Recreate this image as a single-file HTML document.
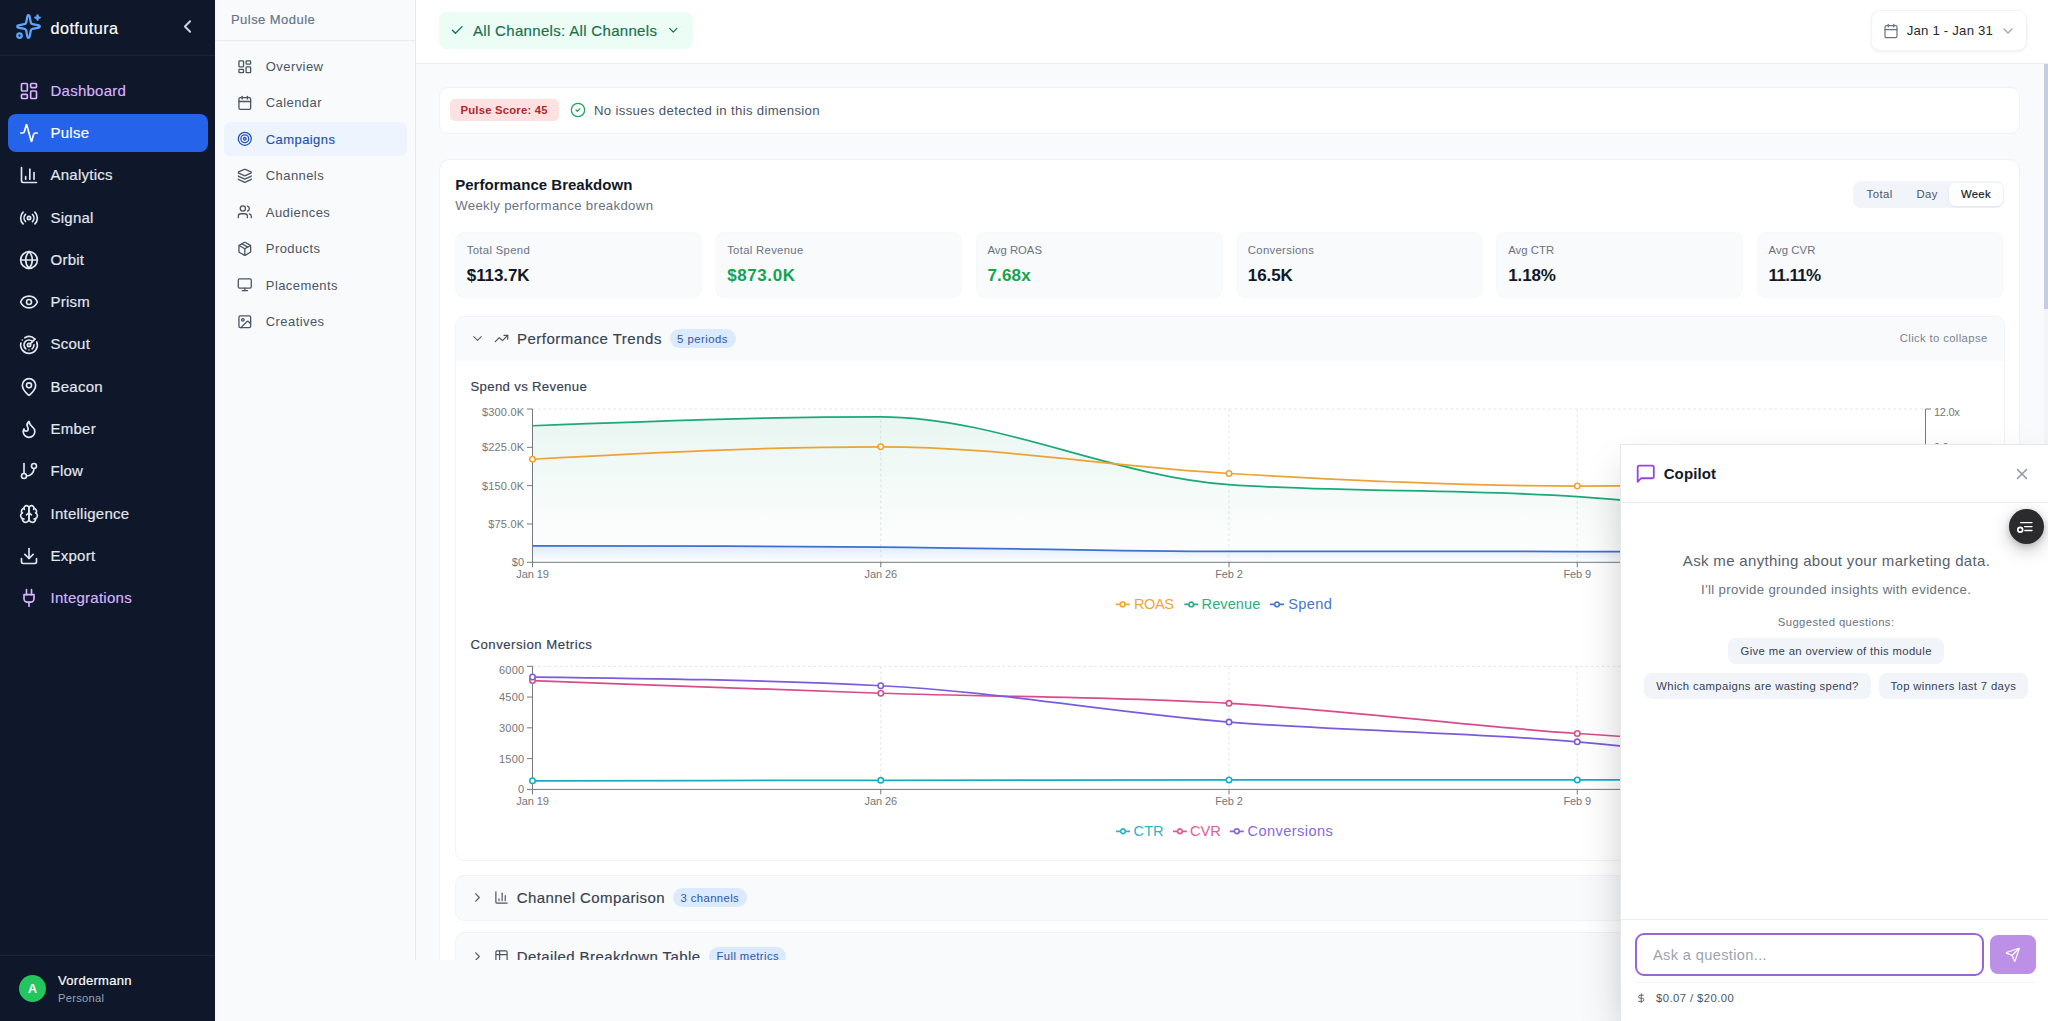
<!DOCTYPE html><html lang="en"><head><meta charset="utf-8"><title>dotfutura – Pulse – Campaigns</title><style>
*{box-sizing:border-box;margin:0;padding:0}
html,body{width:2048px;height:1021px;overflow:hidden;background:#f9fafb;font-family:"Liberation Sans", sans-serif;}
.t{position:absolute;white-space:nowrap;line-height:1;}
.b{position:absolute;}
.ic{position:absolute;display:block;overflow:visible}
.m{-webkit-text-stroke:0.17px currentColor;}
#sb{position:absolute;left:0;top:0;width:215px;height:1021px;background:#0f172a;}
#sub{position:absolute;left:215px;top:0;width:201px;height:960px;background:#f8fafc;border-right:1px solid #e5e8ee;}
#main{position:absolute;left:416px;top:0;width:1632px;height:960px;background:#f8fafc;overflow:hidden;}
#cp{position:absolute;left:1620px;top:444px;width:428px;height:577px;background:#fff;border-top:1px solid #e6e8ec;border-left:1px solid #e6e8ec;box-shadow:0 22px 45px -11px rgba(0,0,0,0.31);}
</style></head><body>
<div id="sb">
<svg class="ic" style="left:15.10px;top:13.00px;width:27px;height:27px;color:#60a5fa" viewBox="0 0 24 24" fill="none" stroke="currentColor" stroke-width="2" stroke-linecap="round" stroke-linejoin="round"><path d="M11.017 2.814a1 1 0 0 1 1.966 0l1.051 5.558a2 2 0 0 0 1.594 1.594l5.558 1.051a1 1 0 0 1 0 1.966l-5.558 1.051a2 2 0 0 0-1.594 1.594l-1.051 5.558a1 1 0 0 1-1.966 0l-1.051-5.558a2 2 0 0 0-1.594-1.594l-5.558-1.051a1 1 0 0 1 0-1.966l5.558-1.051a2 2 0 0 0 1.594-1.594z"/><path d="M20 2v4"/><path d="M22 4h-4"/><circle cx="4" cy="20" r="2"/></svg>
<div class="t m" style="left:50.50px;top:19.68px;font-size:16.2px;color:#ffffff;letter-spacing:0.45px;">dotfutura</div>
<svg class="ic" style="left:176.50px;top:16.10px;width:21px;height:21px;color:#cbd5e1" viewBox="0 0 24 24" fill="none" stroke="currentColor" stroke-width="2.2" stroke-linecap="round" stroke-linejoin="round"><path d="m15 18-6-6 6-6"/></svg>
<div class="b" style="left:0px;top:55px;width:215px;height:1px;background:#1b2537"></div>
<svg class="ic" style="left:18.80px;top:80.70px;width:20px;height:20px;color:#d8b4fe" viewBox="0 0 24 24" fill="none" stroke="currentColor" stroke-width="2" stroke-linecap="round" stroke-linejoin="round"><rect width="7" height="9" x="3" y="3" rx="1"/><rect width="7" height="5" x="14" y="3" rx="1"/><rect width="7" height="9" x="14" y="12" rx="1"/><rect width="7" height="5" x="3" y="16" rx="1"/></svg>
<div class="t m" style="left:50.50px;top:82.60px;font-size:15px;color:#d8b4fe;letter-spacing:0.25px;">Dashboard</div>
<div class="b" style="left:7.5px;top:113.49999999999999px;width:200.5px;height:38.4px;background:#2563eb;border-radius:8px"></div>
<svg class="ic" style="left:18.80px;top:123.00px;width:20px;height:20px;color:#ffffff" viewBox="0 0 24 24" fill="none" stroke="currentColor" stroke-width="2" stroke-linecap="round" stroke-linejoin="round"><path d="M22 12h-2.480a2 2 0 0 0-1.930 1.460l-2.350 8.360a.25.25 0 0 1-.480 0L9.240 2.180a.25.25 0 0 0-.480 0l-2.350 8.360A2 2 0 0 1 4.490 12H2"/></svg>
<div class="t m" style="left:50.50px;top:124.90px;font-size:15px;color:#ffffff;letter-spacing:0.25px;">Pulse</div>
<svg class="ic" style="left:18.80px;top:165.30px;width:20px;height:20px;color:#e2e8f0" viewBox="0 0 24 24" fill="none" stroke="currentColor" stroke-width="2" stroke-linecap="round" stroke-linejoin="round"><path d="M3 3v16a2 2 0 0 0 2 2h16"/><path d="M18 17V9"/><path d="M13 17V5"/><path d="M8 17v-3"/></svg>
<div class="t m" style="left:50.50px;top:167.20px;font-size:15px;color:#e2e8f0;letter-spacing:0.25px;">Analytics</div>
<svg class="ic" style="left:18.80px;top:207.60px;width:20px;height:20px;color:#e2e8f0" viewBox="0 0 24 24" fill="none" stroke="currentColor" stroke-width="2" stroke-linecap="round" stroke-linejoin="round"><path d="M4.900 19.100C1 15.200 1 8.800 4.900 4.900"/><path d="M7.800 16.200c-2.300-2.300-2.300-6.100 0-8.500"/><circle cx="12" cy="12" r="2"/><path d="M16.200 7.800c2.300 2.300 2.300 6.100 0 8.500"/><path d="M19.100 4.900C23 8.800 23 15.100 19.100 19"/></svg>
<div class="t m" style="left:50.50px;top:209.50px;font-size:15px;color:#e2e8f0;letter-spacing:0.25px;">Signal</div>
<svg class="ic" style="left:18.80px;top:249.90px;width:20px;height:20px;color:#e2e8f0" viewBox="0 0 24 24" fill="none" stroke="currentColor" stroke-width="2" stroke-linecap="round" stroke-linejoin="round"><circle cx="12" cy="12" r="10"/><path d="M12 2a14.500 14.500 0 0 0 0 20 14.500 14.500 0 0 0 0-20"/><path d="M2 12h20"/></svg>
<div class="t m" style="left:50.50px;top:251.80px;font-size:15px;color:#e2e8f0;letter-spacing:0.25px;">Orbit</div>
<svg class="ic" style="left:18.80px;top:292.20px;width:20px;height:20px;color:#e2e8f0" viewBox="0 0 24 24" fill="none" stroke="currentColor" stroke-width="2" stroke-linecap="round" stroke-linejoin="round"><path d="M2.062 12.348a1 1 0 0 1 0-.696 10.750 10.750 0 0 1 19.876 0 1 1 0 0 1 0 .696 10.750 10.750 0 0 1-19.876 0"/><circle cx="12" cy="12" r="3"/></svg>
<div class="t m" style="left:50.50px;top:294.10px;font-size:15px;color:#e2e8f0;letter-spacing:0.25px;">Prism</div>
<svg class="ic" style="left:18.80px;top:334.50px;width:20px;height:20px;color:#e2e8f0" viewBox="0 0 24 24" fill="none" stroke="currentColor" stroke-width="2" stroke-linecap="round" stroke-linejoin="round"><path d="M19.070 4.930A10 10 0 0 0 6.990 3.340"/><path d="M4 6h.010"/><path d="M2.290 9.620A10 10 0 1 0 21.310 8.350"/><path d="M16.240 7.760A6 6 0 1 0 8.230 16.670"/><path d="M12 18h.010"/><path d="M17.990 11.660A6 6 0 0 1 15.770 16.670"/><circle cx="12" cy="12" r="2"/><path d="m13.410 10.590 5.660-5.660"/></svg>
<div class="t m" style="left:50.50px;top:336.40px;font-size:15px;color:#e2e8f0;letter-spacing:0.25px;">Scout</div>
<svg class="ic" style="left:18.80px;top:376.80px;width:20px;height:20px;color:#e2e8f0" viewBox="0 0 24 24" fill="none" stroke="currentColor" stroke-width="2" stroke-linecap="round" stroke-linejoin="round"><path d="M20 10c0 4.993-5.539 10.193-7.399 11.799a1 1 0 0 1-1.202 0C9.539 20.193 4 14.993 4 10a8 8 0 0 1 16 0"/><circle cx="12" cy="10" r="3"/></svg>
<div class="t m" style="left:50.50px;top:378.70px;font-size:15px;color:#e2e8f0;letter-spacing:0.25px;">Beacon</div>
<svg class="ic" style="left:18.80px;top:419.10px;width:20px;height:20px;color:#e2e8f0" viewBox="0 0 24 24" fill="none" stroke="currentColor" stroke-width="2" stroke-linecap="round" stroke-linejoin="round"><path d="M8.500 14.500A2.500 2.500 0 0 0 11 12c0-1.380-.500-2-1-3-1.072-2.143-.224-4.054 2-6 .500 2.500 2 4.900 4 6.500 2 1.600 3 3.500 3 5.500a7 7 0 1 1-14 0c0-1.153.433-2.294 1-3a2.500 2.500 0 0 0 2.500 2.500z"/></svg>
<div class="t m" style="left:50.50px;top:421.00px;font-size:15px;color:#e2e8f0;letter-spacing:0.25px;">Ember</div>
<svg class="ic" style="left:18.80px;top:461.40px;width:20px;height:20px;color:#e2e8f0" viewBox="0 0 24 24" fill="none" stroke="currentColor" stroke-width="2" stroke-linecap="round" stroke-linejoin="round"><line x1="6" x2="6" y1="3" y2="15"/><circle cx="18" cy="6" r="3"/><circle cx="6" cy="18" r="3"/><path d="M18 9a9 9 0 0 1-9 9"/></svg>
<div class="t m" style="left:50.50px;top:463.30px;font-size:15px;color:#e2e8f0;letter-spacing:0.25px;">Flow</div>
<svg class="ic" style="left:18.80px;top:503.70px;width:20px;height:20px;color:#e2e8f0" viewBox="0 0 24 24" fill="none" stroke="currentColor" stroke-width="2" stroke-linecap="round" stroke-linejoin="round"><path d="M12 5a3 3 0 1 0-5.997.125 4 4 0 0 0-2.526 5.770 4 4 0 0 0 .556 6.588A4 4 0 1 0 12 18Z"/><path d="M12 5a3 3 0 1 1 5.997.125 4 4 0 0 1 2.526 5.770 4 4 0 0 1-.556 6.588A4 4 0 1 1 12 18Z"/><path d="M15 13a4.500 4.500 0 0 1-3-4 4.500 4.500 0 0 1-3 4"/><path d="M17.599 6.500a3 3 0 0 0 .399-1.375"/><path d="M6.003 5.125A3 3 0 0 0 6.401 6.500"/><path d="M3.477 10.896a4 4 0 0 1 .585-.396"/><path d="M19.938 10.500a4 4 0 0 1 .585.396"/><path d="M6 18a4 4 0 0 1-1.967-.516"/><path d="M19.967 17.484A4 4 0 0 1 18 18"/></svg>
<div class="t m" style="left:50.50px;top:505.60px;font-size:15px;color:#e2e8f0;letter-spacing:0.25px;">Intelligence</div>
<svg class="ic" style="left:18.80px;top:546.00px;width:20px;height:20px;color:#e2e8f0" viewBox="0 0 24 24" fill="none" stroke="currentColor" stroke-width="2" stroke-linecap="round" stroke-linejoin="round"><path d="M21 15v4a2 2 0 0 1-2 2H5a2 2 0 0 1-2-2v-4"/><polyline points="7 10 12 15 17 10"/><line x1="12" x2="12" y1="15" y2="3"/></svg>
<div class="t m" style="left:50.50px;top:547.90px;font-size:15px;color:#e2e8f0;letter-spacing:0.25px;">Export</div>
<svg class="ic" style="left:18.80px;top:588.30px;width:20px;height:20px;color:#d8b4fe" viewBox="0 0 24 24" fill="none" stroke="currentColor" stroke-width="2" stroke-linecap="round" stroke-linejoin="round"><path d="M12 22v-5"/><path d="M9 8V2"/><path d="M15 8V2"/><path d="M18 8v5a4 4 0 0 1-4 4h-4a4 4 0 0 1-4-4V8Z"/></svg>
<div class="t m" style="left:50.50px;top:590.20px;font-size:15px;color:#d8b4fe;letter-spacing:0.25px;">Integrations</div>
<div class="b" style="left:0px;top:955px;width:215px;height:1px;background:#1b2537"></div>
<div class="b" style="left:18.7px;top:974.9px;width:27.6px;height:27.6px;background:#22c55e;border-radius:50%"></div>
<div class="t" style="left:32.50px;transform:translateX(-50%);top:983.35px;font-size:12.6px;color:#ffffff;font-weight:700;">A</div>
<div class="t m" style="left:58.00px;top:973.84px;font-size:13px;color:#ffffff;letter-spacing:0.3px;">Vordermann</div>
<div class="t" style="left:58.00px;top:992.68px;font-size:11.2px;color:#94a3b8;letter-spacing:0.25px;">Personal</div>
</div>
<div id="sub">
<div class="t m" style="left:16.00px;top:12.64px;font-size:13px;color:#64748b;letter-spacing:0.45px;">Pulse Module</div>
<div class="b" style="left:0px;top:40px;width:200px;height:1px;background:#e8ebf0"></div>
<svg class="ic" style="left:21.50px;top:58.50px;width:15.6px;height:15.6px;color:#4b5563" viewBox="0 0 24 24" fill="none" stroke="currentColor" stroke-width="2" stroke-linecap="round" stroke-linejoin="round"><rect width="7" height="9" x="3" y="3" rx="1"/><rect width="7" height="5" x="14" y="3" rx="1"/><rect width="7" height="9" x="14" y="12" rx="1"/><rect width="7" height="5" x="3" y="16" rx="1"/></svg>
<div class="t" style="left:50.80px;top:59.94px;font-size:13px;color:#4b5563;letter-spacing:0.42px;">Overview</div>
<svg class="ic" style="left:21.50px;top:94.95px;width:15.6px;height:15.6px;color:#4b5563" viewBox="0 0 24 24" fill="none" stroke="currentColor" stroke-width="2" stroke-linecap="round" stroke-linejoin="round"><path d="M8 2v4"/><path d="M16 2v4"/><rect width="18" height="18" x="3" y="4" rx="2"/><path d="M3 10h18"/></svg>
<div class="t" style="left:50.80px;top:96.39px;font-size:13px;color:#4b5563;letter-spacing:0.42px;">Calendar</div>
<div class="b" style="left:8.5px;top:121.50000000000001px;width:183px;height:34.6px;background:#eef4fd;border-radius:7px"></div>
<svg class="ic" style="left:21.50px;top:131.40px;width:15.6px;height:15.6px;color:#2453b3" viewBox="0 0 24 24" fill="none" stroke="currentColor" stroke-width="2" stroke-linecap="round" stroke-linejoin="round"><circle cx="12" cy="12" r="10"/><circle cx="12" cy="12" r="6"/><circle cx="12" cy="12" r="2"/></svg>
<div class="t m" style="left:50.80px;top:132.84px;font-size:13px;color:#2453b3;letter-spacing:0.42px;">Campaigns</div>
<svg class="ic" style="left:21.50px;top:167.85px;width:15.6px;height:15.6px;color:#4b5563" viewBox="0 0 24 24" fill="none" stroke="currentColor" stroke-width="2" stroke-linecap="round" stroke-linejoin="round"><path d="M12.830 2.180a2 2 0 0 0-1.660 0L2.600 6.080a1 1 0 0 0 0 1.830l8.580 3.910a2 2 0 0 0 1.660 0l8.580-3.900a1 1 0 0 0 0-1.830z"/><path d="M2 12a1 1 0 0 0 .580.910l8.600 3.910a2 2 0 0 0 1.650 0l8.580-3.900A1 1 0 0 0 22 12"/><path d="M2 17a1 1 0 0 0 .580.910l8.600 3.910a2 2 0 0 0 1.650 0l8.580-3.900A1 1 0 0 0 22 17"/></svg>
<div class="t" style="left:50.80px;top:169.29px;font-size:13px;color:#4b5563;letter-spacing:0.42px;">Channels</div>
<svg class="ic" style="left:21.50px;top:204.30px;width:15.6px;height:15.6px;color:#4b5563" viewBox="0 0 24 24" fill="none" stroke="currentColor" stroke-width="2" stroke-linecap="round" stroke-linejoin="round"><path d="M16 21v-2a4 4 0 0 0-4-4H6a4 4 0 0 0-4 4v2"/><circle cx="9" cy="7" r="4"/><path d="M22 21v-2a4 4 0 0 0-3-3.870"/><path d="M16 3.130a4 4 0 0 1 0 7.750"/></svg>
<div class="t" style="left:50.80px;top:205.74px;font-size:13px;color:#4b5563;letter-spacing:0.42px;">Audiences</div>
<svg class="ic" style="left:21.50px;top:240.75px;width:15.6px;height:15.6px;color:#4b5563" viewBox="0 0 24 24" fill="none" stroke="currentColor" stroke-width="2" stroke-linecap="round" stroke-linejoin="round"><path d="M11 21.730a2 2 0 0 0 2 0l7-4A2 2 0 0 0 21 16V8a2 2 0 0 0-1-1.730l-7-4a2 2 0 0 0-2 0l-7 4A2 2 0 0 0 3 8v8a2 2 0 0 0 1 1.730z"/><path d="M12 22V12"/><polyline points="3.290 7 12 12 20.710 7"/><path d="m7.500 4.270 9 5.150"/></svg>
<div class="t" style="left:50.80px;top:242.19px;font-size:13px;color:#4b5563;letter-spacing:0.42px;">Products</div>
<svg class="ic" style="left:21.50px;top:277.20px;width:15.6px;height:15.6px;color:#4b5563" viewBox="0 0 24 24" fill="none" stroke="currentColor" stroke-width="2" stroke-linecap="round" stroke-linejoin="round"><rect width="20" height="14" x="2" y="3" rx="2"/><line x1="8" x2="16" y1="21" y2="21"/><line x1="12" x2="12" y1="17" y2="21"/></svg>
<div class="t" style="left:50.80px;top:278.64px;font-size:13px;color:#4b5563;letter-spacing:0.42px;">Placements</div>
<svg class="ic" style="left:21.50px;top:313.65px;width:15.6px;height:15.6px;color:#4b5563" viewBox="0 0 24 24" fill="none" stroke="currentColor" stroke-width="2" stroke-linecap="round" stroke-linejoin="round"><rect width="18" height="18" x="3" y="3" rx="2" ry="2"/><circle cx="9" cy="9" r="2"/><path d="m21 15-3.086-3.086a2 2 0 0 0-2.828 0L6 21"/></svg>
<div class="t" style="left:50.80px;top:315.09px;font-size:13px;color:#4b5563;letter-spacing:0.42px;">Creatives</div>
</div>
<div id="main">
<div class="b" style="left:0px;top:0px;width:1632px;height:63px;background:#fff;border-bottom:1px solid #edeff3;height:64px"></div>
<div class="b" style="left:22.5px;top:11.5px;width:254px;height:37.5px;background:#ecfdf5;border-radius:8px"></div>
<svg class="ic" style="left:34.25px;top:23.25px;width:14.5px;height:14.5px;color:#047857" viewBox="0 0 24 24" fill="none" stroke="currentColor" stroke-width="2.2" stroke-linecap="round" stroke-linejoin="round"><path d="M20 6 9 17l-5-5"/></svg>
<div class="t m" style="left:57.00px;top:22.70px;font-size:15px;color:#15704f;letter-spacing:0.32px;">All Channels: All Channels</div>
<svg class="ic" style="left:250.25px;top:23.25px;width:14.5px;height:14.5px;color:#047857" viewBox="0 0 24 24" fill="none" stroke="currentColor" stroke-width="2" stroke-linecap="round" stroke-linejoin="round"><path d="m6 9 6 6 6-6"/></svg>
<div class="b" style="left:1455px;top:10px;width:156px;height:41px;background:#fff;border:1px solid #f1f3f6;border-radius:9px;box-shadow:0 1px 3px rgba(15,23,42,0.07)"></div>
<svg class="ic" style="left:1466.50px;top:22.50px;width:16px;height:16px;color:#6b7280" viewBox="0 0 24 24" fill="none" stroke="currentColor" stroke-width="1.8" stroke-linecap="round" stroke-linejoin="round"><path d="M8 2v4"/><path d="M16 2v4"/><rect width="18" height="18" x="3" y="4" rx="2"/><path d="M3 10h18"/></svg>
<div class="t" style="left:1490.75px;top:23.64px;font-size:13.2px;color:#1f2937;letter-spacing:0.2px;">Jan 1 - Jan 31</div>
<svg class="ic" style="left:1584.20px;top:22.70px;width:16px;height:16px;color:#9ca3af" viewBox="0 0 24 24" fill="none" stroke="currentColor" stroke-width="1.8" stroke-linecap="round" stroke-linejoin="round"><path d="m6 9 6 6 6-6"/></svg>
<div class="b" style="left:1628px;top:64px;width:4px;height:896px;background:#f1f4f9"></div>
<div class="b" style="left:1628px;top:64px;width:4px;height:245px;background:#c7cde0"></div>
<div class="b" style="left:23px;top:87px;width:1581px;height:47px;background:#fff;border:1px solid #f0f2f6;border-radius:9px"></div>
<div class="b" style="left:34px;top:99px;width:109px;height:22.2px;background:#fee2e2;border-radius:5px"></div>
<div class="t" style="left:44.50px;top:105.22px;font-size:11.3px;color:#b4262a;font-weight:700;letter-spacing:0.2px;">Pulse Score: 45</div>
<svg class="ic" style="left:154.00px;top:102.40px;width:16px;height:16px;color:#22a35a" viewBox="0 0 24 24" fill="none" stroke="currentColor" stroke-width="1.9" stroke-linecap="round" stroke-linejoin="round"><circle cx="12" cy="12" r="10"/><path d="m9 12 2 2 4-4"/></svg>
<div class="t" style="left:178.00px;top:103.54px;font-size:13.2px;color:#4b5563;letter-spacing:0.33px;">No issues detected in this dimension</div>
<div class="b" style="left:23px;top:159px;width:1581px;height:900px;background:#fff;border:1px solid #f0f2f6;border-radius:11px"></div>
<div class="t" style="left:39.20px;top:176.80px;font-size:15px;color:#111827;font-weight:700;letter-spacing:0.02px;">Performance Breakdown</div>
<div class="t" style="left:39.20px;top:198.74px;font-size:13.2px;color:#6b7280;letter-spacing:0.33px;">Weekly performance breakdown</div>
<div class="b" style="left:1437px;top:180.5px;width:151px;height:27px;background:#f1f5f9;border-radius:8px"></div>
<div class="b" style="left:1533px;top:183px;width:53.5px;height:22.5px;background:#fff;border-radius:6px;box-shadow:0 1px 2px rgba(15,23,42,0.08)"></div>
<div class="t" style="left:1450.50px;top:189.02px;font-size:11.3px;color:#4b5563;letter-spacing:0.5px;">Total</div>
<div class="t" style="left:1500.50px;top:189.02px;font-size:11.3px;color:#4b5563;letter-spacing:0.4px;">Day</div>
<div class="t m" style="left:1545.00px;top:189.02px;font-size:11.3px;color:#111827;letter-spacing:0.3px;">Week</div>
<div class="b" style="left:39.00px;top:232px;width:247px;height:66px;background:#f8fafc;border:1px solid #f6f8fa;border-radius:9px"></div>
<div class="t" style="left:50.80px;top:244.62px;font-size:11.3px;color:#6b7280;letter-spacing:0.32px;">Total Spend</div>
<div class="t" style="left:50.80px;top:267.16px;font-size:17px;color:#111827;font-weight:700;letter-spacing:-0.1px;">$113.7K</div>
<div class="b" style="left:299.35px;top:232px;width:247px;height:66px;background:#f8fafc;border:1px solid #f6f8fa;border-radius:9px"></div>
<div class="t" style="left:311.15px;top:244.62px;font-size:11.3px;color:#6b7280;letter-spacing:0.32px;">Total Revenue</div>
<div class="t" style="left:311.15px;top:267.16px;font-size:17px;color:#16a34a;font-weight:700;letter-spacing:0.6px;">$873.0K</div>
<div class="b" style="left:559.70px;top:232px;width:247px;height:66px;background:#f8fafc;border:1px solid #f6f8fa;border-radius:9px"></div>
<div class="t" style="left:571.50px;top:244.62px;font-size:11.3px;color:#6b7280;">Avg ROAS</div>
<div class="t" style="left:571.50px;top:267.16px;font-size:17px;color:#16a34a;font-weight:700;letter-spacing:0.15px;">7.68x</div>
<div class="b" style="left:820.05px;top:232px;width:247px;height:66px;background:#f8fafc;border:1px solid #f6f8fa;border-radius:9px"></div>
<div class="t" style="left:831.85px;top:244.62px;font-size:11.3px;color:#6b7280;letter-spacing:0.32px;">Conversions</div>
<div class="t" style="left:831.85px;top:267.16px;font-size:17px;color:#111827;font-weight:700;letter-spacing:-0.1px;">16.5K</div>
<div class="b" style="left:1080.40px;top:232px;width:247px;height:66px;background:#f8fafc;border:1px solid #f6f8fa;border-radius:9px"></div>
<div class="t" style="left:1092.20px;top:244.62px;font-size:11.3px;color:#6b7280;letter-spacing:0.05px;">Avg CTR</div>
<div class="t" style="left:1092.20px;top:267.16px;font-size:17px;color:#111827;font-weight:700;letter-spacing:-0.1px;">1.18%</div>
<div class="b" style="left:1340.75px;top:232px;width:247px;height:66px;background:#f8fafc;border:1px solid #f6f8fa;border-radius:9px"></div>
<div class="t" style="left:1352.55px;top:244.62px;font-size:11.3px;color:#6b7280;letter-spacing:0.1px;">Avg CVR</div>
<div class="t" style="left:1352.55px;top:267.16px;font-size:17px;color:#111827;font-weight:700;letter-spacing:-0.62px;">11.11%</div>
<div class="b" style="left:39px;top:315.5px;width:1549.5px;height:545.5px;background:#fff;border:1px solid #f1f3f6;border-radius:9px;overflow:hidden"></div>
<div class="b" style="left:40px;top:316.5px;width:1547.5px;height:44.5px;background:#f8fafc;border-radius:8px 8px 0 0"></div>
<svg class="ic" style="left:54.10px;top:331.40px;width:15px;height:15px;color:#56606e" viewBox="0 0 24 24" fill="none" stroke="currentColor" stroke-width="1.7" stroke-linecap="round" stroke-linejoin="round"><path d="m6 9 6 6 6-6"/></svg>
<svg class="ic" style="left:77.70px;top:331.40px;width:15px;height:15px;color:#4b5563" viewBox="0 0 24 24" fill="none" stroke="currentColor" stroke-width="1.9" stroke-linecap="round" stroke-linejoin="round"><polyline points="22 7 13.500 15.500 8.500 10.500 2 17"/><polyline points="16 7 22 7 22 13"/></svg>
<div class="t m" style="left:101.00px;top:331.40px;font-size:15px;color:#374151;letter-spacing:0.5px;">Performance Trends</div>
<div class="b" style="left:253.79999999999995px;top:329.3px;width:66.2px;height:19.2px;background:#dbeafe;border-radius:10px"></div>
<div class="t" style="left:261.00px;top:333.72px;font-size:11.3px;color:#2c56a8;letter-spacing:0.48px;">5 periods</div>
<div class="t" style="left:1483.80px;top:333.12px;font-size:11.3px;color:#7b8291;letter-spacing:0.36px;">Click to collapse</div>
<div class="t m" style="left:54.50px;top:379.94px;font-size:13.2px;color:#374151;letter-spacing:0.32px;">Spend vs Revenue</div>
<div class="t m" style="left:54.50px;top:638.14px;font-size:13.2px;color:#374151;letter-spacing:0.5px;">Conversion Metrics</div>
<svg class="ic" style="left:0;top:0;width:1632px;height:960px;font-family:'Liberation Sans', sans-serif" viewBox="416 0 1632 960"><defs><linearGradient id="gRev" x1="0" y1="0" x2="0" y2="1"><stop offset="0" stop-color="#1a9f75" stop-opacity="0.095"/><stop offset="1" stop-color="#1a9f75" stop-opacity="0.0"/></linearGradient><linearGradient id="gSp" x1="0" y1="0" x2="0" y2="1"><stop offset="0" stop-color="#3b82f6" stop-opacity="0.16"/><stop offset="1" stop-color="#3b82f6" stop-opacity="0.0"/></linearGradient></defs><g stroke="#dfe1e5" stroke-width="0.9" stroke-dasharray="2.7 2.7" fill="none"><line x1="532.5" y1="409" x2="1925.5" y2="409"/><line x1="880.75" y1="409" x2="880.75" y2="562.3"/><line x1="1229.0" y1="409" x2="1229.0" y2="562.3"/><line x1="1577.25" y1="409" x2="1577.25" y2="562.3"/></g><path d="M532.50,425.75C648.58,421.25,764.67,416.75,880.75,416.75C996.83,416.75,1112.92,476.70,1229.00,484.70C1345.08,492.70,1461.17,488.70,1577.25,496.70C1693.33,504.70,1809.42,522.35,1925.50,540.00L1925.5,562.3L532.5,562.3Z" fill="url(#gRev)"/><path d="M532.50,545.75C648.58,545.96,764.67,546.17,880.75,547.00C996.83,547.83,1112.92,551.33,1229.00,551.40C1345.08,551.47,1461.17,551.43,1577.25,551.50C1693.33,551.57,1809.42,551.78,1925.50,552.00L1925.5,562.3L532.5,562.3Z" fill="url(#gSp)"/><g stroke="#666a6e" stroke-width="0.9" fill="none"><line x1="532.5" y1="409" x2="532.5" y2="562.3"/><line x1="532.5" y1="562.3" x2="1925.5" y2="562.3"/><line x1="527" y1="562.30" x2="532.5" y2="562.30"/><line x1="527" y1="523.97" x2="532.5" y2="523.97"/><line x1="527" y1="485.65" x2="532.5" y2="485.65"/><line x1="527" y1="447.32" x2="532.5" y2="447.32"/><line x1="527" y1="409.00" x2="532.5" y2="409.00"/><line x1="532.5" y1="562.3" x2="532.5" y2="567.3"/><line x1="880.75" y1="562.3" x2="880.75" y2="567.3"/><line x1="1229.0" y1="562.3" x2="1229.0" y2="567.3"/><line x1="1577.25" y1="562.3" x2="1577.25" y2="567.3"/><line x1="1925.5" y1="562.3" x2="1925.5" y2="567.3"/><line x1="1925.5" y1="409" x2="1925.5" y2="562.3"/><line x1="1925.5" y1="562.30" x2="1931" y2="562.30"/><line x1="1925.5" y1="523.97" x2="1931" y2="523.97"/><line x1="1925.5" y1="485.65" x2="1931" y2="485.65"/><line x1="1925.5" y1="447.32" x2="1931" y2="447.32"/><line x1="1925.5" y1="409.00" x2="1931" y2="409.00"/></g><g fill="#74777c" font-size="11" letter-spacing="0.2"><text x="524.3" y="566.20" text-anchor="end">$0</text><text x="524.3" y="527.87" text-anchor="end">$75.0K</text><text x="524.3" y="489.55" text-anchor="end">$150.0K</text><text x="524.3" y="451.22" text-anchor="end">$225.0K</text><text x="524.3" y="416.30" text-anchor="end">$300.0K</text><text x="532.5" y="577.9" text-anchor="middle" letter-spacing="-0.1">Jan 19</text><text x="880.75" y="577.9" text-anchor="middle" letter-spacing="-0.1">Jan 26</text><text x="1229.0" y="577.9" text-anchor="middle" letter-spacing="-0.1">Feb 2</text><text x="1577.25" y="577.9" text-anchor="middle" letter-spacing="-0.1">Feb 9</text><text x="1925.5" y="577.9" text-anchor="middle" letter-spacing="-0.1">Feb 16</text><text x="1934" y="566.20" letter-spacing="-0.3">0.0x</text><text x="1934" y="527.87" letter-spacing="-0.3">3.0x</text><text x="1934" y="489.55" letter-spacing="-0.3">6.0x</text><text x="1934" y="451.22" letter-spacing="-0.3">9.0x</text><text x="1934" y="416.30" letter-spacing="-0.3">12.0x</text></g><path d="M532.50,425.75C648.58,421.25,764.67,416.75,880.75,416.75C996.83,416.75,1112.92,476.70,1229.00,484.70C1345.08,492.70,1461.17,488.70,1577.25,496.70C1693.33,504.70,1809.42,522.35,1925.50,540.00" fill="none" stroke="#1ba97a" stroke-width="1.75"/><path d="M532.50,545.75C648.58,545.96,764.67,546.17,880.75,547.00C996.83,547.83,1112.92,551.33,1229.00,551.40C1345.08,551.47,1461.17,551.43,1577.25,551.50C1693.33,551.57,1809.42,551.78,1925.50,552.00" fill="none" stroke="#3d70d2" stroke-width="1.75"/><path d="M532.50,459.25C648.58,453.00,764.67,446.75,880.75,446.75C996.83,446.75,1112.92,466.96,1229.00,473.50C1345.08,480.04,1461.17,486.00,1577.25,486.00C1693.33,486.00,1809.42,483.00,1925.50,480.00" fill="none" stroke="#eda332" stroke-width="1.75"/><circle cx="532.5" cy="459.25" r="2.7" fill="#fff" stroke="#eda332" stroke-width="1.6"/><circle cx="880.75" cy="446.75" r="2.7" fill="#fff" stroke="#eda332" stroke-width="1.6"/><circle cx="1229.0" cy="473.5" r="2.7" fill="#fff" stroke="#eda332" stroke-width="1.6"/><circle cx="1577.25" cy="486.0" r="2.7" fill="#fff" stroke="#eda332" stroke-width="1.6"/><circle cx="1925.5" cy="480" r="2.7" fill="#fff" stroke="#eda332" stroke-width="1.6"/><path d="M1115.7,604.4000000000001h4.67A2.33,2.33 0 1 1 1125.03,604.4000000000001H1129.7M1125.03,604.4000000000001A2.33,2.33 0 1 1 1120.3700000000001,604.4000000000001" fill="none" stroke="#eda737" stroke-width="1.7"/><text x="1134" y="608.8000000000001" font-size="14.6" fill="#eda737" letter-spacing="-0.45">ROAS</text><path d="M1184.3,604.4000000000001h4.67A2.33,2.33 0 1 1 1193.6299999999999,604.4000000000001H1198.3M1193.6299999999999,604.4000000000001A2.33,2.33 0 1 1 1188.97,604.4000000000001" fill="none" stroke="#2dae80" stroke-width="1.7"/><text x="1201.6" y="608.8000000000001" font-size="14.6" fill="#2dae80" letter-spacing="0.05">Revenue</text><path d="M1270,604.4000000000001h4.67A2.33,2.33 0 1 1 1279.33,604.4000000000001H1284M1279.33,604.4000000000001A2.33,2.33 0 1 1 1274.67,604.4000000000001" fill="none" stroke="#4676d0" stroke-width="1.7"/><text x="1288.2" y="608.8000000000001" font-size="14.6" fill="#4676d0" letter-spacing="0.35">Spend</text><g stroke="#dfe1e5" stroke-width="0.9" stroke-dasharray="2.7 2.7" fill="none"><line x1="532.5" y1="666.3" x2="1925.5" y2="666.3"/><line x1="880.75" y1="666.3" x2="880.75" y2="789.4"/><line x1="1229.0" y1="666.3" x2="1229.0" y2="789.4"/><line x1="1577.25" y1="666.3" x2="1577.25" y2="789.4"/></g><g stroke="#666a6e" stroke-width="0.9" fill="none"><line x1="532.5" y1="666.3" x2="532.5" y2="789.4"/><line x1="532.5" y1="789.4" x2="1925.5" y2="789.4"/><line x1="527" y1="789.40" x2="532.5" y2="789.40"/><line x1="527" y1="758.62" x2="532.5" y2="758.62"/><line x1="527" y1="727.85" x2="532.5" y2="727.85"/><line x1="527" y1="697.07" x2="532.5" y2="697.07"/><line x1="527" y1="666.30" x2="532.5" y2="666.30"/><line x1="532.5" y1="789.4" x2="532.5" y2="794.4"/><line x1="880.75" y1="789.4" x2="880.75" y2="794.4"/><line x1="1229.0" y1="789.4" x2="1229.0" y2="794.4"/><line x1="1577.25" y1="789.4" x2="1577.25" y2="794.4"/><line x1="1925.5" y1="789.4" x2="1925.5" y2="794.4"/></g><g fill="#74777c" font-size="11" letter-spacing="0.2"><text x="524.3" y="793.30" text-anchor="end">0</text><text x="524.3" y="762.52" text-anchor="end">1500</text><text x="524.3" y="731.75" text-anchor="end">3000</text><text x="524.3" y="700.97" text-anchor="end">4500</text><text x="524.3" y="673.60" text-anchor="end">6000</text><text x="532.5" y="805.0" text-anchor="middle" letter-spacing="-0.1">Jan 19</text><text x="880.75" y="805.0" text-anchor="middle" letter-spacing="-0.1">Jan 26</text><text x="1229.0" y="805.0" text-anchor="middle" letter-spacing="-0.1">Feb 2</text><text x="1577.25" y="805.0" text-anchor="middle" letter-spacing="-0.1">Feb 9</text><text x="1925.5" y="805.0" text-anchor="middle" letter-spacing="-0.1">Feb 16</text></g><path d="M532.50,780.75C648.58,780.60,764.67,780.44,880.75,780.30C996.83,780.16,1112.92,779.90,1229.00,779.90C1345.08,779.90,1461.17,779.90,1577.25,779.90C1693.33,779.90,1809.42,779.90,1925.50,779.90" fill="none" stroke="#18abc4" stroke-width="1.75"/><path d="M532.50,680.60C648.58,685.03,764.67,689.47,880.75,693.25C996.83,697.03,1112.92,696.60,1229.00,703.30C1345.08,710.00,1461.17,725.55,1577.25,733.50C1693.33,741.45,1809.42,746.23,1925.50,751.00" fill="none" stroke="#da4b8b" stroke-width="1.75"/><path d="M532.50,677.00C648.58,678.46,764.67,679.92,880.75,685.75C996.83,691.58,1112.92,712.76,1229.00,722.10C1345.08,731.44,1461.17,731.65,1577.25,741.80C1693.33,751.95,1809.42,767.48,1925.50,783.00" fill="none" stroke="#7b5bdb" stroke-width="1.75"/><circle cx="532.5" cy="780.75" r="2.7" fill="#fff" stroke="#18abc4" stroke-width="1.6"/><circle cx="880.75" cy="780.3" r="2.7" fill="#fff" stroke="#18abc4" stroke-width="1.6"/><circle cx="1229.0" cy="779.9" r="2.7" fill="#fff" stroke="#18abc4" stroke-width="1.6"/><circle cx="1577.25" cy="779.9" r="2.7" fill="#fff" stroke="#18abc4" stroke-width="1.6"/><circle cx="1925.5" cy="779.9" r="2.7" fill="#fff" stroke="#18abc4" stroke-width="1.6"/><circle cx="532.5" cy="680.6" r="2.7" fill="#fff" stroke="#da4b8b" stroke-width="1.6"/><circle cx="880.75" cy="693.25" r="2.7" fill="#fff" stroke="#da4b8b" stroke-width="1.6"/><circle cx="1229.0" cy="703.3" r="2.7" fill="#fff" stroke="#da4b8b" stroke-width="1.6"/><circle cx="1577.25" cy="733.5" r="2.7" fill="#fff" stroke="#da4b8b" stroke-width="1.6"/><circle cx="1925.5" cy="751" r="2.7" fill="#fff" stroke="#da4b8b" stroke-width="1.6"/><circle cx="532.5" cy="677" r="2.7" fill="#fff" stroke="#7b5bdb" stroke-width="1.6"/><circle cx="880.75" cy="685.75" r="2.7" fill="#fff" stroke="#7b5bdb" stroke-width="1.6"/><circle cx="1229.0" cy="722.1" r="2.7" fill="#fff" stroke="#7b5bdb" stroke-width="1.6"/><circle cx="1577.25" cy="741.8" r="2.7" fill="#fff" stroke="#7b5bdb" stroke-width="1.6"/><circle cx="1925.5" cy="783" r="2.7" fill="#fff" stroke="#7b5bdb" stroke-width="1.6"/><path d="M1116,831.3000000000001h4.67A2.33,2.33 0 1 1 1125.33,831.3000000000001H1130M1125.33,831.3000000000001A2.33,2.33 0 1 1 1120.67,831.3000000000001" fill="none" stroke="#2fb2ca" stroke-width="1.7"/><text x="1133.6" y="835.7" font-size="14.6" fill="#2fb2ca" letter-spacing="0.0">CTR</text><path d="M1172.9,831.3000000000001h4.67A2.33,2.33 0 1 1 1182.23,831.3000000000001H1186.9M1182.23,831.3000000000001A2.33,2.33 0 1 1 1177.5700000000002,831.3000000000001" fill="none" stroke="#df5c98" stroke-width="1.7"/><text x="1190" y="835.7" font-size="14.6" fill="#df5c98" letter-spacing="0.0">CVR</text><path d="M1229.8,831.3000000000001h4.67A2.33,2.33 0 1 1 1239.1299999999999,831.3000000000001H1243.8M1239.1299999999999,831.3000000000001A2.33,2.33 0 1 1 1234.47,831.3000000000001" fill="none" stroke="#8569de" stroke-width="1.7"/><text x="1247.5" y="835.7" font-size="14.6" fill="#8569de" letter-spacing="0.42">Conversions</text></svg>
<div class="b" style="left:39px;top:874.5px;width:1549.5px;height:46px;background:#f8fafc;border:1px solid #f1f4f7;border-radius:9px"></div>
<svg class="ic" style="left:53.90px;top:890.20px;width:15px;height:15px;color:#56606e" viewBox="0 0 24 24" fill="none" stroke="currentColor" stroke-width="1.7" stroke-linecap="round" stroke-linejoin="round"><path d="m9 18 6-6-6-6"/></svg>
<svg class="ic" style="left:77.50px;top:890.20px;width:15px;height:15px;color:#4b5563" viewBox="0 0 24 24" fill="none" stroke="currentColor" stroke-width="1.9" stroke-linecap="round" stroke-linejoin="round"><path d="M3 3v16a2 2 0 0 0 2 2h16"/><path d="M18 17V9"/><path d="M13 17V5"/><path d="M8 17v-3"/></svg>
<div class="t m" style="left:100.80px;top:890.20px;font-size:15px;color:#374151;letter-spacing:0.4px;">Channel Comparison</div>
<div class="b" style="left:257.20px;top:888.20px;width:73.4px;height:19.2px;background:#dbeafe;border-radius:10px"></div>
<div class="t" style="left:264.50px;top:892.52px;font-size:11.3px;color:#2c56a8;letter-spacing:0.4px;">3 channels</div>
<div class="b" style="left:39px;top:932.3px;width:1549.5px;height:46px;background:#f8fafc;border:1px solid #f1f4f7;border-radius:9px"></div>
<svg class="ic" style="left:53.90px;top:948.80px;width:15px;height:15px;color:#56606e" viewBox="0 0 24 24" fill="none" stroke="currentColor" stroke-width="1.7" stroke-linecap="round" stroke-linejoin="round"><path d="m9 18 6-6-6-6"/></svg>
<svg class="ic" style="left:77.50px;top:948.80px;width:15px;height:15px;color:#4b5563" viewBox="0 0 24 24" fill="none" stroke="currentColor" stroke-width="1.9" stroke-linecap="round" stroke-linejoin="round"><path d="M9 3H5a2 2 0 0 0-2 2v4m6-6h10a2 2 0 0 1 2 2v4M9 3v18m0 0h10a2 2 0 0 0 2-2V9M9 21H5a2 2 0 0 1-2-2V9m0 0h18"/></svg>
<div class="t m" style="left:100.80px;top:948.80px;font-size:15px;color:#374151;letter-spacing:0.4px;">Detailed Breakdown Table</div>
<div class="b" style="left:293.20px;top:946.80px;width:76.7px;height:19.2px;background:#dbeafe;border-radius:10px"></div>
<div class="t" style="left:300.50px;top:951.12px;font-size:11.3px;color:#2c56a8;letter-spacing:0.4px;">Full metrics</div>
</div>
<div id="cp">
<svg class="ic" style="left:14.15px;top:18.45px;width:21.5px;height:21.5px;color:#9645e0" viewBox="0 0 24 24" fill="none" stroke="currentColor" stroke-width="2" stroke-linecap="round" stroke-linejoin="round"><path d="M21 15a2 2 0 0 1-2 2H7l-4 4V5a2 2 0 0 1 2-2h14a2 2 0 0 1 2 2z"/></svg>
<div class="t" style="left:42.70px;top:20.80px;font-size:15px;color:#111827;font-weight:700;letter-spacing:0.1px;">Copilot</div>
<svg class="ic" style="left:392.40px;top:19.70px;width:18px;height:18px;color:#8b90a7" viewBox="0 0 24 24" fill="none" stroke="currentColor" stroke-width="1.8" stroke-linecap="round" stroke-linejoin="round"><path d="M18 6 6 18"/><path d="m6 6 12 12"/></svg>
<div class="b" style="left:0px;top:57px;width:427px;height:1px;background:#e9ecf1"></div>
<div class="b" style="left:388px;top:64px;width:35px;height:35px;background:#2b2b2e;border-radius:50%;box-shadow:0 6px 18px rgba(0,0,0,0.22),0 2px 6px rgba(0,0,0,0.18)"></div>
<svg class="ic" style="left:388px;top:64px;width:35px;height:35px" viewBox="2009 509 35 35" fill="none" stroke="#fff" stroke-width="1.3" stroke-linecap="round"><line x1="2020.6" y1="522.6" x2="2032" y2="522.6"/><line x1="2024.6" y1="526.6" x2="2032" y2="526.6"/><line x1="2024.8" y1="530.5" x2="2032" y2="530.5"/><circle cx="2020.2" cy="529.7" r="2.4" stroke-width="1.7"/></svg>
<div class="t" style="left:215.50px;transform:translateX(-50%);top:107.80px;font-size:15px;color:#59606d;letter-spacing:0.33px;">Ask me anything about your marketing data.</div>
<div class="t" style="left:215.20px;transform:translateX(-50%);top:138.34px;font-size:13.2px;color:#6b7280;letter-spacing:0.36px;">I'll provide grounded insights with evidence.</div>
<div class="t" style="left:215.10px;transform:translateX(-50%);top:171.92px;font-size:11.3px;color:#6b7280;letter-spacing:0.4px;">Suggested questions:</div>
<div class="b" style="left:107.4px;top:192.8px;width:215.6px;height:26.2px;background:#f1f5f9;border-radius:8px"></div>
<div class="t" style="left:215.20px;transform:translateX(-50%);top:200.82px;font-size:11.3px;color:#374151;letter-spacing:0.36px;">Give me an overview of this module</div>
<div class="b" style="left:23.0px;top:227.5px;width:227px;height:26.2px;background:#f1f5f9;border-radius:8px"></div>
<div class="t" style="left:136.50px;transform:translateX(-50%);top:235.52px;font-size:11.3px;color:#374151;letter-spacing:0.36px;">Which campaigns are wasting spend?</div>
<div class="b" style="left:257.8px;top:227.5px;width:149.2px;height:26.2px;background:#f1f5f9;border-radius:8px"></div>
<div class="t" style="left:332.40px;transform:translateX(-50%);top:235.52px;font-size:11.3px;color:#374151;letter-spacing:0.36px;">Top winners last 7 days</div>
<div class="b" style="left:0px;top:474px;width:427px;height:1px;background:#eceef2"></div>
<div class="b" style="left:13.5px;top:488px;width:349px;height:43px;background:#fff;border:2px solid #9866d8;border-radius:9px"></div>
<div class="t" style="left:32.00px;top:503.11px;font-size:14.6px;color:#9ca3af;letter-spacing:0.36px;">Ask a question...</div>
<div class="b" style="left:369px;top:490px;width:46px;height:39.2px;background:#bd90e8;border-radius:8px"></div>
<svg class="ic" style="left:383.85px;top:502.05px;width:15.5px;height:15.5px;color:#ffffff" viewBox="0 0 24 24" fill="none" stroke="currentColor" stroke-width="1.9" stroke-linecap="round" stroke-linejoin="round"><path d="M14.536 21.686a.5.5 0 0 0 .937-.024l6.500-19a.496.496 0 0 0-.635-.635l-19 6.500a.5.5 0 0 0-.024.937l7.930 3.180a2 2 0 0 1 1.112 1.110z"/><path d="m21.854 2.147-10.940 10.939"/></svg>
<div class="b" style="left:13.5px;top:537px;width:401.5px;height:1px;background:#f1f3f6"></div>
<svg class="ic" style="left:15.45px;top:547.55px;width:10.5px;height:10.5px;color:#4b5563" viewBox="0 0 24 24" fill="none" stroke="currentColor" stroke-width="2" stroke-linecap="round" stroke-linejoin="round"><line x1="12" x2="12" y1="2" y2="22"/><path d="M17 5H9.500a3.500 3.500 0 0 0 0 7h5a3.500 3.500 0 0 1 0 7H6"/></svg>
<div class="t" style="left:35.00px;top:547.52px;font-size:11.3px;color:#4b5563;letter-spacing:0.42px;">$0.07 / $20.00</div>
</div>
</body></html>
